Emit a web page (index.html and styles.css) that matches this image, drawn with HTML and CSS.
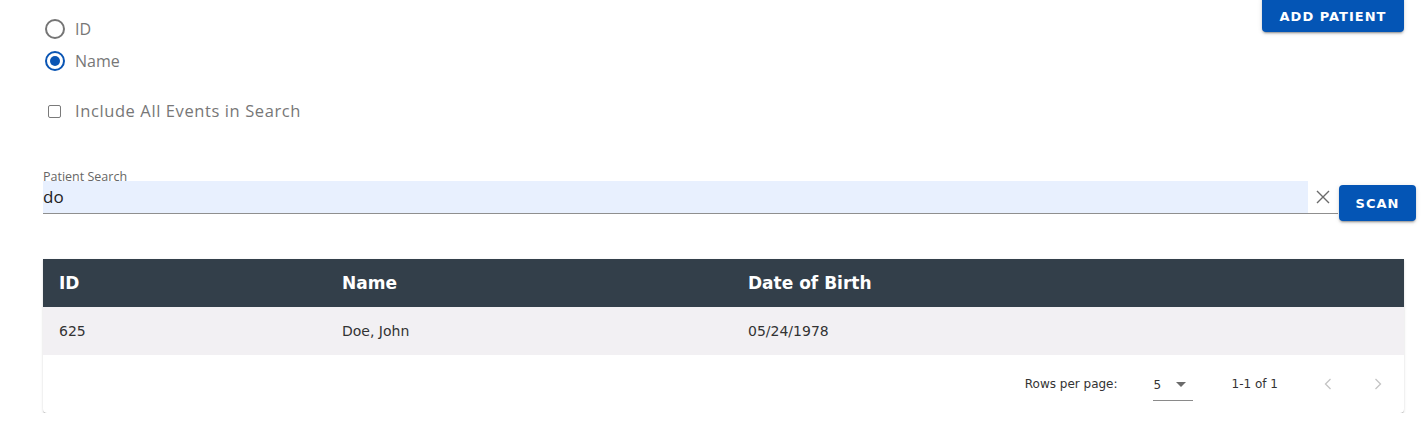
FILE: index.html
```html
<!DOCTYPE html>
<html lang="en">
<head>
<meta charset="utf-8">
<title>Patient Search</title>
<link rel="stylesheet" href="styles.css">
</head>
<body>
<div class="page">
  <div class="top">
    <div class="options">
      <label class="radio-row">
        <svg class="radio" width="24" height="24" viewBox="0 0 24 24"><circle cx="12" cy="12" r="9" fill="none" stroke="#757575" stroke-width="2"/></svg>
        <span class="opt-label">ID</span>
      </label>
      <label class="radio-row">
        <svg class="radio" width="24" height="24" viewBox="0 0 24 24"><circle cx="12" cy="12" r="9" fill="none" stroke="#0a55b4" stroke-width="2"/><circle cx="12" cy="12" r="5" fill="#0a55b4"/></svg>
        <span class="opt-label">Name</span>
      </label>
      <label class="check-row">
        <span class="checkbox"></span>
        <span class="opt-label check-label">Include All Events in Search</span>
      </label>
    </div>
    <button class="btn btn-add">ADD PATIENT</button>
  </div>

  <div class="search">
    <div class="search-label">Patient Search</div>
    <div class="search-row">
      <div class="field">
        <div class="input">do</div>
        <div class="clear">
          <svg width="16" height="16" viewBox="0 0 16 16"><path d="M2 2 L14 14 M14 2 L2 14" stroke="#6b6b6b" stroke-width="1.4" fill="none"/></svg>
        </div>
      </div>
      <button class="btn btn-scan">SCAN</button>
    </div>
  </div>

  <div class="table">
    <div class="row head">
      <div class="cell">ID</div>
      <div class="cell">Name</div>
      <div class="cell">Date of Birth</div>
    </div>
    <div class="row body">
      <div class="cell">625</div>
      <div class="cell">Doe, John</div>
      <div class="cell">05/24/1978</div>
    </div>
    <div class="footer">
      <span class="rows-label">Rows per page:</span>
      <div class="select">
        <span>5</span>
        <svg width="10" height="5" viewBox="0 0 10 5"><path d="M0 0 L10 0 L5 5 Z" fill="#6b6b6b"/></svg>
      </div>
      <span class="range">1-1 of 1</span>
      <div class="pager">
        <span class="nav"><svg width="8" height="12" viewBox="0 0 8 12"><path d="M6.5 1 L1.5 6 L6.5 11" stroke="#c4c4c4" stroke-width="1.3" fill="none"/></svg></span>
        <span class="nav"><svg width="8" height="12" viewBox="0 0 8 12"><path d="M1.5 1 L6.5 6 L1.5 11" stroke="#c4c4c4" stroke-width="1.3" fill="none"/></svg></span>
      </div>
    </div>
  </div>
</div>
</body>
</html>
```

FILE: styles.css
```css
html, body {
  margin: 0;
  padding: 0;
  background: #ffffff;
}

body {
  font-family: "Open Sans", "Noto Sans", sans-serif;
  color: #333;
}

.page {
  padding: 0 22px 0 43px;
}

.top {
  display: flex;
  justify-content: space-between;
  align-items: flex-start;
}

.options {
  display: flex;
  flex-direction: column;
  padding-top: 13px;
}

.radio-row {
  display: flex;
  align-items: center;
  height: 32px;
}

.radio {
  display: block;
  margin-right: 8px;
}

.opt-label {
  font-size: 16px;
  color: #777;
  line-height: 20px;
}

.check-label {
  font-size: 16.5px;
  letter-spacing: 0.6px;
}

.check-row {
  display: flex;
  align-items: center;
  height: 24px;
  margin-top: 22px;
}

.checkbox {
  box-sizing: border-box;
  width: 13px;
  height: 13px;
  border: 1px solid #7a7a7a;
  border-radius: 2px;
  margin-left: 5px;
  margin-right: 14px;
}

.btn {
  border: none;
  background: #0455b5;
  color: #fff;
  font-family: "DejaVu Sans", Verdana, sans-serif;
  font-weight: bold;
  font-size: 13px;
  letter-spacing: 1px;
  border-radius: 4px;
  box-shadow: 0 3px 1px -2px rgba(0,0,0,0.2), 0 2px 2px 0 rgba(0,0,0,0.14), 0 1px 5px 0 rgba(0,0,0,0.12);
  padding: 0;
}

.btn-add {
  width: 142px;
  height: 36px;
  margin-top: -4px;
  padding-top: 4px;
}

.search {
  margin-top: 47px;
}

.search-label {
  font-size: 12.5px;
  line-height: 13px;
  color: #666;
  height: 11px;
}

.search-row {
  display: flex;
  align-items: flex-start;
  margin-right: -12px;
}

.field {
  flex: 1;
  display: flex;
  border-bottom: 1px solid #8f8f8f;
  height: 32px;
}

.input {
  flex: 1;
  background: #e8f0fe;
  font-size: 17px;
  line-height: 32px;
  color: #222;
}

.clear {
  width: 30px;
  display: flex;
  align-items: center;
  justify-content: center;
}

.btn-scan {
  width: 77px;
  height: 36px;
  margin-left: 1px;
  margin-top: 4px;
}

.table {
  margin-top: 38px;
  box-shadow: 0 2px 1px -1px rgba(0,0,0,0.2), 0 1px 1px 0 rgba(0,0,0,0.14), 0 1px 3px 0 rgba(0,0,0,0.12);
  border-radius: 0 0 4px 4px;
  background: #fff;
}

.row {
  display: grid;
  grid-template-columns: 283px 406px 1fr;
  height: 48px;
  align-items: center;
  font-family: "DejaVu Sans", Verdana, sans-serif;
}

.cell {
  padding-left: 16px;
}

.head {
  background: #333f4a;
  color: #fff;
  font-weight: bold;
  font-size: 17px;
}

.body {
  background: #f2f0f3;
  color: #333;
  font-size: 14px;
}

.footer {
  height: 58px;
  display: flex;
  justify-content: flex-end;
  align-items: center;
  padding-right: 2px;
  font-family: "DejaVu Sans", Verdana, sans-serif;
  font-size: 12px;
  color: #333;
}

.rows-label {
  margin-right: 35px;
}

.select {
  display: flex;
  align-items: center;
  width: 40px;
  height: 32px;
  box-sizing: border-box;
  border-bottom: 1px solid #8a8a8a;
  padding-left: 1px;
  margin-top: 2px;
  font-size: 12px;
}

.select svg {
  margin-left: 15px;
}

.range {
  margin-left: 39px;
  margin-right: 26px;
}

.pager {
  display: flex;
  gap: 2px;
}

.nav {
  width: 48px;
  height: 48px;
  display: flex;
  align-items: center;
  justify-content: center;
}
```
